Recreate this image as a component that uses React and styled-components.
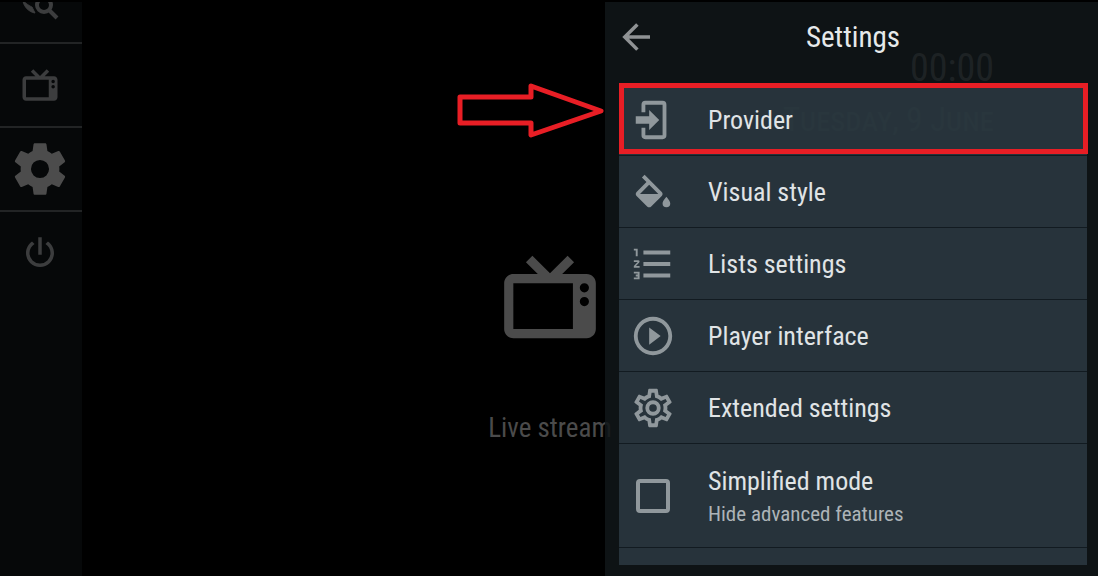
import React, { useState } from 'react'
import styled, { createGlobalStyle } from 'styled-components'

const icons = {
  tv: 'M8.16,3L6.75,4.41L9.34,7H4C2.89,7 2,7.89 2,9V19C2,20.11 2.89,21 4,21H20C21.11,21 22,20.11 22,19V9C22,7.89 21.11,7 20,7H14.66L17.25,4.41L15.84,3L12,6.84L8.16,3M4,9H17V19H4V9M19.5,9A1,1 0 0,1 20.5,10A1,1 0 0,1 19.5,11A1,1 0 0,1 18.5,10A1,1 0 0,1 19.5,9M19.5,12A1,1 0 0,1 20.5,13A1,1 0 0,1 19.5,14A1,1 0 0,1 18.5,13A1,1 0 0,1 19.5,12Z',
  cog: 'M12,15.5A3.5,3.5 0 0,1 8.5,12A3.5,3.5 0 0,1 12,8.5A3.5,3.5 0 0,1 15.5,12A3.5,3.5 0 0,1 12,15.5M19.43,12.97C19.47,12.65 19.5,12.33 19.5,12C19.5,11.67 19.47,11.34 19.43,11L21.54,9.37C21.73,9.22 21.78,8.95 21.66,8.73L19.66,5.27C19.54,5.05 19.27,4.96 19.05,5.05L16.56,6.05C16.04,5.66 15.5,5.32 14.87,5.07L14.5,2.42C14.46,2.18 14.25,2 14,2H10C9.75,2 9.54,2.18 9.5,2.42L9.13,5.07C8.5,5.32 7.96,5.66 7.44,6.05L4.95,5.05C4.73,4.96 4.46,5.05 4.34,5.27L2.34,8.73C2.21,8.95 2.27,9.22 2.46,9.37L4.57,11C4.53,11.34 4.5,11.67 4.5,12C4.5,12.33 4.53,12.65 4.57,12.97L2.46,14.63C2.27,14.78 2.21,15.05 2.34,15.27L4.34,18.73C4.46,18.95 4.73,19.03 4.95,18.95L7.44,17.94C7.96,18.34 8.5,18.68 9.13,18.93L9.5,21.58C9.54,21.82 9.75,22 10,22H14C14.25,22 14.46,21.82 14.5,21.58L14.87,18.93C15.5,18.67 16.04,18.34 16.56,17.94L19.05,18.95C19.27,19.03 19.54,18.95 19.66,18.73L21.66,15.27C21.78,15.05 21.73,14.78 21.54,14.63L19.43,12.97Z',
  power: 'M16.56,5.44L15.11,6.89C16.84,7.94 18,9.83 18,12A6,6 0 0,1 12,18A6,6 0 0,1 6,12C6,9.83 7.16,7.94 8.88,6.88L7.44,5.44C5.36,6.88 4,9.28 4,12A8,8 0 0,0 12,20A8,8 0 0,0 20,12C20,9.28 18.64,6.88 16.56,5.44M13,3H11V13H13',
  back: 'M20,11V13H8L13.5,18.5L12.08,19.92L4.16,12L12.08,4.08L13.5,5.5L8,11H20Z',
  login: 'M10,17.25V14H3V10H10V6.75L15.25,12L10,17.25M8,2H17A2,2 0 0,1 19,4V20A2,2 0 0,1 17,22H8A2,2 0 0,1 6,20V16H8V20H17V4H8V8H6V4A2,2 0 0,1 8,2Z',
  fill: 'M19,11.5C19,11.5 17,13.67 17,15A2,2 0 0,0 19,17A2,2 0 0,0 21,15C21,13.67 19,11.5 19,11.5M5.21,10L10,5.21L14.79,10M16.56,8.94L7.62,0L6.21,1.41L8.59,3.79L3.44,8.94C2.85,9.5 2.85,10.47 3.44,11.06L8.94,16.56C9.23,16.85 9.62,17 10,17C10.38,17 10.77,16.85 11.06,16.56L16.56,11.06C17.15,10.47 17.15,9.5 16.56,8.94Z',
  list: 'M7,13V11H21V13H7M7,19V17H21V19H7M7,7V5H21V7H7M3,8V5H2V4H4V8H3M2,17V16H5V20H2V19H4V18.5H3V17.5H4V17H2M4.25,10A0.75,0.75 0 0,1 5,10.75C5,10.95 4.92,11.14 4.79,11.27L3.12,13H5V14H2V13.08L4,11H2V10H4.25Z',
  play: 'M12,20C7.59,20 4,16.41 4,12C4,7.59 7.59,4 12,4C16.41,4 20,7.59 20,12C20,16.41 16.41,20 12,20M12,2A10,10 0 0,0 2,12A10,10 0 0,0 12,22A10,10 0 0,0 22,12A10,10 0 0,0 12,2M10,16.5L16,12L10,7.5V16.5Z',
  cogOutline: 'M12,8A4,4 0 0,1 16,12A4,4 0 0,1 12,16A4,4 0 0,1 8,12A4,4 0 0,1 12,8M12,10A2,2 0 0,0 10,12A2,2 0 0,0 12,14A2,2 0 0,0 14,12A2,2 0 0,0 12,10M10,22C9.75,22 9.54,21.82 9.5,21.58L9.13,18.93C8.5,18.68 7.96,18.34 7.44,17.94L4.95,18.95C4.73,19.03 4.46,18.95 4.34,18.73L2.34,15.27C2.21,15.05 2.27,14.78 2.46,14.63L4.57,12.97L4.5,12L4.57,11L2.46,9.37C2.27,9.22 2.21,8.95 2.34,8.73L4.34,5.27C4.46,5.05 4.73,4.96 4.95,5.05L7.44,6.05C7.96,5.66 8.5,5.32 9.13,5.07L9.5,2.42C9.54,2.18 9.75,2 10,2H14C14.25,2 14.46,2.18 14.5,2.42L14.87,5.07C15.5,5.32 16.04,5.66 16.56,6.05L19.05,5.05C19.27,4.96 19.54,5.05 19.66,5.27L21.66,8.73C21.79,8.95 21.73,9.22 21.54,9.37L19.43,11L19.5,12L19.43,13L21.54,14.63C21.73,14.78 21.79,15.05 21.66,15.27L19.66,18.73C19.54,18.95 19.27,19.04 19.05,18.95L16.56,17.95C16.04,18.34 15.5,18.68 14.87,18.93L14.5,21.58C14.46,21.82 14.25,22 14,22H10M11.25,4L10.88,6.61C9.68,6.86 8.62,7.5 7.85,8.39L5.44,7.35L4.69,8.65L6.8,10.2C6.4,11.37 6.4,12.64 6.8,13.8L4.68,15.36L5.43,16.66L7.86,15.62C8.63,16.5 9.68,17.14 10.87,17.38L11.24,20H12.76L13.13,17.39C14.32,17.14 15.37,16.5 16.14,15.62L18.57,16.66L19.32,15.36L17.2,13.81C17.6,12.64 17.6,11.37 17.2,10.2L19.31,8.65L18.56,7.35L16.15,8.39C15.38,7.5 14.32,6.86 13.12,6.62L12.75,4H11.25Z',
}

const Icon = ({ name, size, box = '0 0 24 24' }) => (
  <svg width={size} height={size} viewBox={box} fill="currentColor" fillRule="evenodd" aria-hidden="true">
    <path d={icons[name]} />
  </svg>
)

const SearchIcon = () => (
  <svg width="42" height="42" viewBox="0 0 42 42" fill="none" stroke="currentColor" aria-hidden="true">
    <path d="M4 22C5 28 10 33 16 34L13 28C11 27 9 26 4 22Z" fill="currentColor" strokeWidth="1" />
    <path d="M8 22H14" strokeWidth="2" />
    <circle cx="25" cy="26" r="7" strokeWidth="4" />
    <path d="M30 31L38 39" strokeWidth="4" />
  </svg>
)

const settings = [
  { label: 'Provider', icon: 'login', marked: true },
  { label: 'Visual style', icon: 'fill', box: '0 -3 24 24' },
  { label: 'Lists settings', icon: 'list' },
  { label: 'Player interface', icon: 'play' },
  { label: 'Extended settings', icon: 'cogOutline' },
]

export default () => {
  const [simplified, setSimplified] = useState(false)

  return (
    <Screen>
      <GlobalStyle />
      <Sidebar aria-label="Main">
        <NavButton aria-label="Search"><SearchIcon /></NavButton>
        <NavButton aria-label="Live stream"><Icon name="tv" size={42} /></NavButton>
        <NavButton aria-label="Settings" active><Icon name="cog" size={62} /></NavButton>
        <NavButton aria-label="Exit"><Icon name="power" size={42} /></NavButton>
      </Sidebar>

      <Home>
        <Clock>
          <Time>00:00</Time>
          <Today>Tuesday, 9 June</Today>
        </Clock>
        <Tile href="#live">
          <Icon name="tv" size={110} />
          <span>Live stream</span>
        </Tile>
      </Home>

      <Drawer>
        <Header>
          <BackButton aria-label="Back"><Icon name="back" size={42} /></BackButton>
          <Title>Settings</Title>
        </Header>
        <List>
          {settings.map(({ label, icon, box, marked }) => (
            <Item key={label}>
              <Row as="button">
                <Icon name={icon} size={46} box={box} />
                <Label>{label}</Label>
              </Row>
              {marked ? <Marker /> : null}
              {marked ? <Pointer /> : null}
            </Item>
          ))}
          <Item>
            <Row as="label" tall>
              <Checkbox
                type="checkbox"
                checked={simplified}
                onChange={e => setSimplified(e.target.checked)}
              />
              <span>
                <Label>Simplified mode</Label>
                <Hint>Hide advanced features</Hint>
              </span>
            </Row>
          </Item>
        </List>
      </Drawer>
    </Screen>
  )
}

const Pointer = () => (
  <PointerSvg width="148" height="56" viewBox="0 0 148 56" aria-hidden="true">
    <path d="M4 14H75V3L145 28L75 52V40H4Z" />
  </PointerSvg>
)

const GlobalStyle = createGlobalStyle`
  * {
    box-sizing: border-box;
  }

  body {
    margin: 0;
    background: #000;
    font-family: 'Roboto Condensed', Roboto, 'Liberation Sans', sans-serif;
  }

  button {
    margin: 0;
    padding: 0;
    border: 0;
    background: none;
    color: inherit;
    font: inherit;
    cursor: pointer;
  }

  svg {
    display: block;
    flex: none;
  }
`

const Screen = styled.div`
  position: relative;
  display: flex;
  height: 100vh;
  border-top: 2px solid #000;
  overflow: hidden;
`

/* scrolled by half an item */
const Sidebar = styled.nav`
  display: flex;
  flex-direction: column;
  flex: none;
  width: 82px;
  margin-top: -44px;
  background: #060809;
`

const NavButton = styled.button.withConfig({ shouldForwardProp: p => p !== 'active' })`
  display: flex;
  align-items: center;
  justify-content: center;
  flex: none;
  height: 84px;
  padding-right: 2px;
  color: ${p => (p.active ? '#4c4c4c' : '#3c3d3e')};

  & + & {
    border-top: 2px solid #222425;
  }
`

const Home = styled.main`
  display: flex;
  flex-direction: column;
  flex: 1;
  align-items: center;
  padding-right: 80px;
  color: #4b4b4b;
`

const Clock = styled.div`
  align-self: flex-end;
  height: 100px;
  margin-top: 42px;
  padding-right: 24px;
  color: #6c6c6c;
  text-align: right;
`

const Time = styled.div`
  font-size: 38px;
  line-height: 48px;
`

const Today = styled.div`
  font-size: 33px;
  line-height: 56px;
  font-variant: small-caps;
`

const Tile = styled.a`
  display: flex;
  flex-direction: column;
  align-items: center;
  gap: 58px;
  margin-top: 98px;
  color: inherit;
  font-size: 27px;
  line-height: 36px;
  text-decoration: none;
`

const Drawer = styled.aside`
  position: absolute;
  top: 0;
  right: 0;
  bottom: 0;
  display: flex;
  flex-direction: column;
  width: 493px;
  max-width: 100%;
  padding: 0 11px 11px 14px;
  background: rgba(16, 22, 25, 0.86);
`

const Header = styled.header`
  display: grid;
  grid-template-columns: 1fr auto 1fr;
  align-items: center;
  flex: none;
  height: 82px;
  padding-bottom: 12px;
`

const BackButton = styled.button`
  justify-self: start;
  margin-left: -4px;
  color: #8f9294;
`

const Title = styled.h1`
  margin: 0;
  color: #e6e9ea;
  font-size: 29px;
  font-weight: 400;
`

const List = styled.ul`
  flex: 1;
  margin: 0;
  padding: 0;
  list-style: none;
  background: rgba(44, 58, 66, 0.85);
`

const Item = styled.li`
  position: relative;
  border-bottom: 1px solid #121b21;
`

const Row = styled.div.withConfig({ shouldForwardProp: p => p !== 'tall' })`
  display: flex;
  align-items: center;
  gap: 32px;
  width: 100%;
  height: ${p => (p.tall ? 103 : 71)}px;
  padding-left: 11px;
  color: #90989c;
  text-align: left;
`

const Label = styled.span`
  display: block;
  color: #e0e4e6;
  font-size: 26px;
  line-height: 36px;
`

const Hint = styled.span`
  display: block;
  color: #adb4b8;
  font-size: 21px;
  line-height: 30px;
`

const Checkbox = styled.input`
  appearance: none;
  flex: none;
  width: 34px;
  height: 34px;
  margin: 0 6px;
  border: 4px solid #90989c;
  border-radius: 4px;

  &:checked {
    background: #90989c;
  }
`

const Marker = styled.span`
  position: absolute;
  inset: -1px -1px 1px 0;
  border: 5px solid #e81e25;
  pointer-events: none;
`

const PointerSvg = styled.svg`
  position: absolute;
  top: -1px;
  right: calc(100% + 15px);
  fill: none;
  stroke: #e81e25;
  stroke-width: 5;
  stroke-linejoin: round;
`
